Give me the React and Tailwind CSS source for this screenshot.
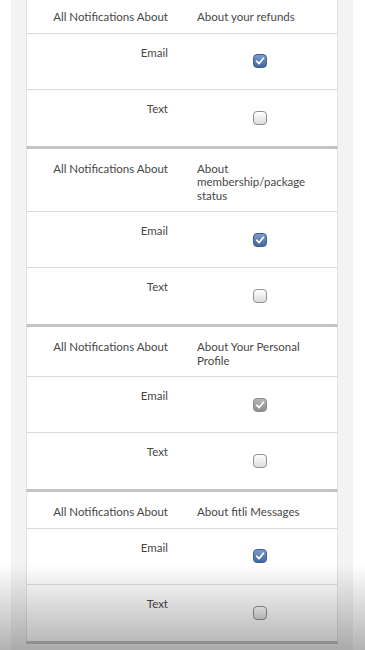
import React from 'react';

const sections = [
  { topic: 'About your refunds', email: 'blue', text: false },
  { topic: 'About membership/package status', email: 'blue', text: false },
  { topic: 'About Your Personal Profile', email: 'gray', text: false },
  { topic: 'About fitli Messages', email: 'blue', text: false },
];

const Box = ({ kind }) => {
  if (!kind) {
    return (
      <span className="block w-[14px] h-[14px] rounded-[4px] border border-[#8f8f8f] bg-gradient-to-b from-[#ffffff] to-[#dcdcdc] shadow-[inset_0_1px_1px_rgba(255,255,255,0.9)]"></span>
    );
  }
  const tone =
    kind === 'blue'
      ? 'border-[#3e5d8f] from-[#7d9bcd] to-[#4666a0]'
      : 'border-[#8a8a8a] from-[#b8b8b8] to-[#8e8e8e]';
  return (
    <span className={`flex items-center justify-center w-[14px] h-[14px] rounded-[4px] border bg-gradient-to-b ${tone}`}>
      <svg width="10" height="10" viewBox="0 0 10 10" fill="none">
        <path d="M1.8 5.2 L4 7.6 L8.4 2.2" stroke="#ffffff" strokeWidth="1.7" strokeLinecap="round" strokeLinejoin="round" />
      </svg>
    </span>
  );
};

const Row = ({ label, kind, last }) => (
  <div className={`grid grid-cols-2 h-[56px] ${last ? '' : 'border-b border-[#dcdcdc]'}`}>
    <div className="text-right pr-[14px] pt-[12px]">{label}</div>
    <div className="flex items-center justify-center">
      <Box kind={kind} />
    </div>
  </div>
);

const App = () => {
  return (
    <div className="relative h-[650px] overflow-hidden bg-white text-[11.5px] leading-[13.5px] text-[#474747]" style={{ fontFamily: 'Lato, "Noto Sans", sans-serif' }}>
      <div className="ml-[11px] mr-[12px] px-[15px] bg-[#f3f3f3] min-h-[660px] -mt-[3px]">
        {sections.map((s, i) => (
          <div key={i} className="bg-white rounded-t-[3px] border-x border-[#e0e0e0] border-b-[3px] border-b-[#c4c4c4]">
            <div className="grid grid-cols-2 pt-[13px] pb-[9px] border-b border-[#dcdcdc]">
              <div className="text-right pr-[14px]">All Notifications About</div>
              <div className="pl-[15px] pr-[20px]">{s.topic}</div>
            </div>
            <Row label="Email" kind={s.email} />
            <Row label="Text" kind={s.text} last />
          </div>
        ))}
      </div>
      <div className="absolute left-0 right-0 bottom-0 h-[86px] pointer-events-none bg-gradient-to-b from-transparent to-black/30"></div>
    </div>
  );
};

export default App;
